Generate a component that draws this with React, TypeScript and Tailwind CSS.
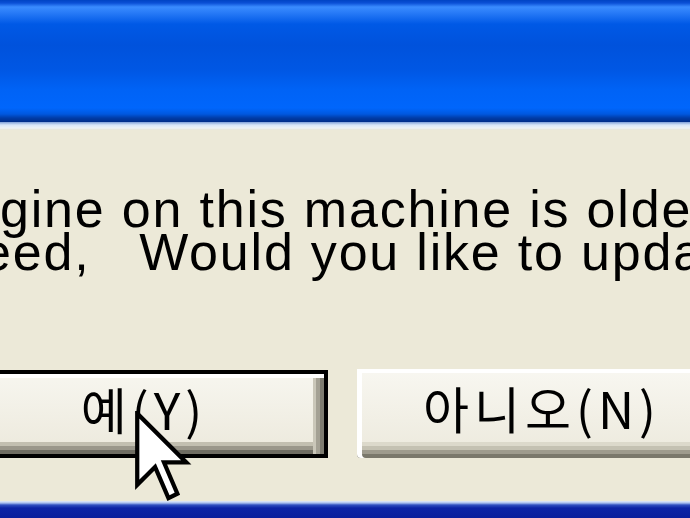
import React from "react";

// Zoomed-in corner of an XP style confirm dialog
function Cursor() {
  return (
    <svg
      className="absolute left-[135px] top-[411px]"
      width="58"
      height="94"
      viewBox="0 0 13 21"
    >
      <path
        d="M0.5 0.5 L0.5 16.5 L4.5 12.5 L7.5 19.5 L9.5 18.5 L6.5 11.5 L11.5 11.5 Z"
        fill="#ffffff"
        stroke="#000000"
        strokeWidth={0.95}
        strokeLinejoin="miter"
      />
    </svg>
  );
}

export default function App() {
  return (
    <div className="relative w-[690px] h-[518px] overflow-hidden flex flex-col bg-[#ece9d8]">
      {/* title bar */}
      <div className="h-[122px] shrink-0 bg-[linear-gradient(to_bottom,#0044c4_0px,#0a50d6_3px,#3a8cff_7px,#2a7df8_12px,#0059e6_24px,#0052dc_45px,#0057e4_70px,#0063f6_90px,#0066fc_108px,#0058e0_114px,#003ca8_118px,#002c88_122px)]" />
      <div className="h-[8px] shrink-0 bg-[linear-gradient(to_bottom,#7f9fd8_0px,#d8e6f8_3px,#eef2f6_6px,#e6e4d6_8px)]" />

      {/* body */}
      <div className="flex-1 flex flex-col pt-[58px] text-black">
        <div className="font-['Liberation_Sans',Arial,sans-serif] text-[52px] leading-[43px] tracking-[1.8px] whitespace-pre">
          <div>gine on this machine is older than</div>
          <div className="ml-[-18px]">eed,   Would you like to update?</div>
        </div>

        <div className="flex gap-[29px] ml-[-44px] mt-[96px]">
          <button className="shrink-0 w-[372px] h-[88px] border-4 border-black bg-[linear-gradient(to_bottom,#f7f6ef,#ece9dc)] shadow-[inset_0_4px_0_#ffffff,inset_-4px_0_0_#7e7c70,inset_-8px_0_0_#a4a194,inset_-11px_0_0_#cac7b9,inset_0_-4px_0_#6f6d62,inset_0_-8px_0_#9a978a,inset_0_-12px_0_#c2bfb0] flex items-center justify-center pb-[12px] pl-[4px]">
            <span className="font-['Noto_Sans_CJK_KR',sans-serif] text-[50px] leading-none tracking-[5px]">
              예(Y)
            </span>
          </button>
          <button className="shrink-0 w-[372px] h-[89px] mt-[-1px] rounded-bl-[4px] bg-[linear-gradient(to_bottom,#f8f7f1,#ece9dc)] shadow-[inset_0_4px_0_#ffffff,inset_5px_0_0_#ffffff,inset_0_-4px_0_#7a786b,inset_0_-8px_0_#9e9b8d,inset_0_-12px_0_#c4c1b2,inset_0_-16px_0_#dcd9cb] flex items-center justify-center pb-[14px] pr-[2px]">
            <span className="font-['Noto_Sans_CJK_KR',sans-serif] text-[50px] leading-none tracking-[5px]">
              아니오(N)
            </span>
          </button>
        </div>
      </div>

      {/* taskbar edge */}
      <div className="h-[17px] shrink-0 bg-[linear-gradient(to_bottom,#e4ecf8_0px,#a8bff0_2px,#3050c0_4px,#0c24a6_7px,#0a1e9c_17px)]" />

      <Cursor />
    </div>
  );
}
